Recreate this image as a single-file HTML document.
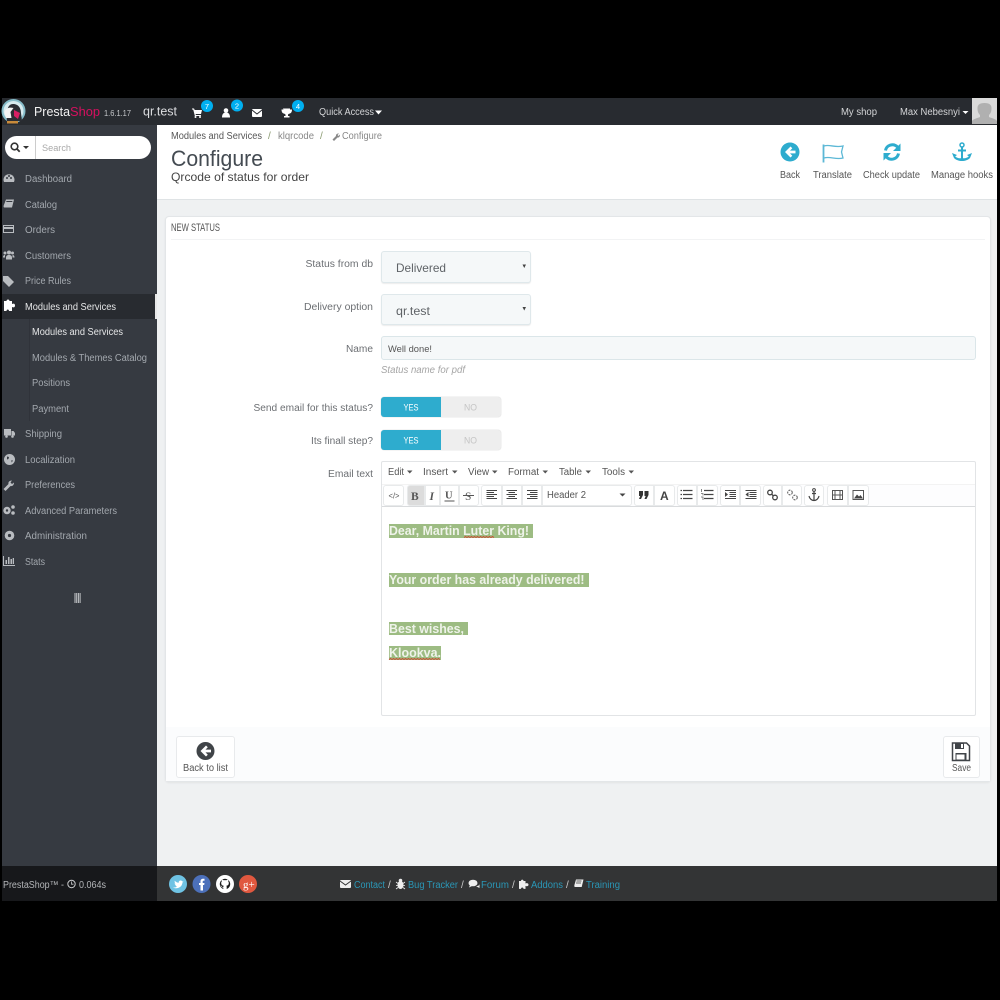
<!DOCTYPE html>
<html><head><meta charset="utf-8"><title>Configure</title>
<style>
html,body{margin:0;padding:0;background:#000;width:1000px;height:1000px;overflow:hidden}
.b{position:absolute;box-sizing:border-box}
svg.o{position:absolute;left:0;top:0}
svg text{font-family:"Liberation Sans",sans-serif;font-size:10px;white-space:pre}
.s text{fill:#a3a8ae}
.g{fill:#6c6f73}
.tb{border:1px solid #e8eaeb;background:#fff;height:21px;top:485px}
</style></head><body>
<div class="b" style="left:2px;top:98px;width:995px;height:803px;background:#eff1f2"></div>
<div class="b" style="left:2px;top:98px;width:995px;height:27px;background:#282b30"></div>
<div class="b" style="left:2px;top:125px;width:155px;height:741px;background:#363a41"></div>
<div class="b" style="left:2px;top:294px;width:155px;height:25px;background:#282b30;border-right:2px solid #e8e8e8"></div>
<div class="b" style="left:29px;top:319px;width:1px;height:102px;background:#30333a"></div>
<div class="b" style="left:157px;top:125px;width:840px;height:75px;background:#fff;border-bottom:1px solid #dfe3e5"></div>
<div class="b" style="left:5px;top:136px;width:146px;height:23px;background:#fff;border-radius:12px"></div>
<div class="b" style="left:35px;top:136px;width:1px;height:23px;background:#ccc"></div>
<div class="b" style="left:972px;top:98px;width:25px;height:26px;background:#dadada"></div>
<div class="b" style="left:165px;top:216px;width:826px;height:566px;background:#fff;border:1px solid #e3e6e8;border-radius:4px;box-shadow:0 1px 2px rgba(0,0,0,.06)"></div>
<div class="b" style="left:171px;top:239px;width:814px;height:1px;background:#f2f3f4"></div>
<div class="b" style="left:166px;top:727px;width:824px;height:54px;background:#fbfcfd"></div>
<div class="b" style="left:381px;top:251px;width:150px;height:32px;background:#f5f8f9;border:1px solid #dfe8eb;border-radius:3px;box-shadow:0 1px 1px rgba(0,0,0,.08)"></div>
<div class="b" style="left:381px;top:294px;width:150px;height:31px;background:#f5f8f9;border:1px solid #dfe8eb;border-radius:3px;box-shadow:0 1px 1px rgba(0,0,0,.08)"></div>
<div class="b" style="left:381px;top:336px;width:595px;height:24px;background:#f5f8f9;border:1px solid #dbe6e9;border-radius:3px"></div>
<div class="b" style="left:381px;top:397px;width:120px;height:20px;background:#eee;border-radius:3px;box-shadow:0 0 1px #bbb"></div>
<div class="b" style="left:381px;top:397px;width:60px;height:20px;background:#2eacce;border-radius:3px 0 0 3px"></div>
<div class="b" style="left:381px;top:430px;width:120px;height:20px;background:#eee;border-radius:3px;box-shadow:0 0 1px #bbb"></div>
<div class="b" style="left:381px;top:430px;width:60px;height:20px;background:#2eacce;border-radius:3px 0 0 3px"></div>
<div class="b" style="left:381px;top:461px;width:595px;height:255px;background:#fff;border:1px solid #e2e4e6;border-radius:2px"></div>
<div class="b" style="left:382px;top:484px;width:593px;height:23px;background:#fdfdfe;border-top:1px solid #f3f3f3;border-bottom:1px solid #d9dbdd"></div>
<div class="b tb" style="left:383px;width:21px;border-radius:3px"></div>
<div class="b tb" style="left:407px;width:18px;background:#dcdcdc;border-radius:3px 0 0 3px"></div>
<div class="b tb" style="left:425px;width:15px"></div>
<div class="b tb" style="left:440px;width:19px"></div>
<div class="b tb" style="left:459px;width:20px;border-radius:0 3px 3px 0"></div>
<div class="b tb" style="left:481px;width:21px;border-radius:3px 0 0 3px"></div>
<div class="b tb" style="left:502px;width:20px"></div>
<div class="b tb" style="left:522px;width:20px"></div>
<div class="b tb" style="left:542px;width:90px;border-radius:0 3px 3px 0"></div>
<div class="b tb" style="left:634px;width:20px;border-radius:3px 0 0 3px"></div>
<div class="b tb" style="left:654px;width:21px;border-radius:0 3px 3px 0"></div>
<div class="b tb" style="left:677px;width:20px;border-radius:3px 0 0 3px"></div>
<div class="b tb" style="left:697px;width:21px;border-radius:0 3px 3px 0"></div>
<div class="b tb" style="left:720px;width:20px;border-radius:3px 0 0 3px"></div>
<div class="b tb" style="left:740px;width:21px;border-radius:0 3px 3px 0"></div>
<div class="b tb" style="left:763px;width:19px;border-radius:3px 0 0 3px"></div>
<div class="b tb" style="left:782px;width:20px;border-radius:0 3px 3px 0"></div>
<div class="b tb" style="left:804px;width:20px;border-radius:3px"></div>
<div class="b tb" style="left:827px;width:21px;border-radius:3px 0 0 3px"></div>
<div class="b tb" style="left:848px;width:21px;border-radius:0 3px 3px 0"></div>
<div class="b" style="left:389px;top:524px;width:144px;height:14px;background:#9dbc83"></div>
<div class="b" style="left:389px;top:573px;width:200px;height:14px;background:#9dbc83"></div>
<div class="b" style="left:389px;top:622px;width:79px;height:13px;background:#9dbc83"></div>
<div class="b" style="left:389px;top:646px;width:52px;height:14px;background:#9dbc83"></div>
<div class="b" style="left:176px;top:736px;width:59px;height:42px;background:#fff;border:1px solid #e8eaec;border-radius:3px"></div>
<div class="b" style="left:943px;top:736px;width:37px;height:42px;background:#fff;border:1px solid #e8eaec;border-radius:3px"></div>
<div class="b" style="left:2px;top:866px;width:155px;height:35px;background:#17181b"></div>
<div class="b" style="left:157px;top:866px;width:840px;height:35px;background:#333435"></div>

<svg class="o" width="1000" height="1000" viewBox="0 0 1000 1000" xmlns="http://www.w3.org/2000/svg">
<!-- logo -->
<circle cx="13.5" cy="111" r="12" fill="#86bcc9"/>
<circle cx="13.5" cy="111" r="10" fill="#d8ebef"/>
<path d="M7 121c-1-8 0-17 6-17 6 0 8 5 8 9l1 8z" fill="#2b2d33"/>
<path d="M4.500 112c1-4 5-5 9-4l-3 4 1 6H6z" fill="#f3f3f3"/>
<path d="M14 110l6 3-2 6-4-3z" fill="#d81e63"/>
<path d="M7 121h11v2.500H7z" fill="#c88a3a"/>
<!-- header text -->
<text x="34" y="116" textLength="36" lengthAdjust="spacingAndGlyphs" style="font-size:13px" fill="#f2f2f2">Presta</text>
<text x="70" y="116" textLength="30" lengthAdjust="spacingAndGlyphs" style="font-size:13px" fill="#d6105f">Shop</text>
<text x="104" y="116" textLength="27" lengthAdjust="spacingAndGlyphs" style="font-size:8px" fill="#c4c6c9">1.6.1.17</text>
<text x="143" y="115.500" textLength="34" lengthAdjust="spacingAndGlyphs" style="font-size:12.500px" fill="#dcdde0">qr.test</text>
<path d="M192 108.500h2l.7 1.500h7.300l-1 4h-5.500l.4 1h5v1h-6l-1.700-6.500h-1.200z" fill="#fff"/><circle cx="195.500" cy="117" r="1" fill="#fff"/><circle cx="200" cy="117" r="1" fill="#fff"/>
<circle cx="207" cy="106" r="6" fill="#00aff0"/><text x="207" y="109" text-anchor="middle" style="font-size:7.500px" fill="#fff">7</text>
<circle cx="226" cy="110.500" r="2.300" fill="#fff"/><path d="M222 117.500c0-3.500 1.500-5 4-5s4 1.500 4 5z" fill="#fff"/>
<circle cx="237" cy="105.500" r="6" fill="#00aff0"/><text x="237" y="108.500" text-anchor="middle" style="font-size:7.500px" fill="#fff">2</text>
<rect x="252" y="109" width="10" height="8" rx="1" fill="#fff"/><path d="M252 110l5 4 5-4" fill="none" stroke="#282b30" stroke-width="1"/>
<path d="M283 108.500h7v1h2c0 2.500-1 4-3 4.200l-1 .8v1.500h1.500v1.500h-5.500v-1.500h1.500v-1.500l-1-.8c-2-.2-3-1.700-3-4.200h2z" fill="#fff"/>
<circle cx="298" cy="106" r="6" fill="#00aff0"/><text x="298" y="109" text-anchor="middle" style="font-size:7.500px" fill="#fff">4</text>
<text x="319" y="115" textLength="55" lengthAdjust="spacingAndGlyphs" fill="#d4d5d7">Quick Access</text>
<path d="M375 110.500h7l-3.500 4z" fill="#fff"/>
<text x="841" y="115" textLength="36" lengthAdjust="spacingAndGlyphs" fill="#d4d5d7">My shop</text>
<text x="900" y="115" textLength="60" lengthAdjust="spacingAndGlyphs" fill="#d4d5d7">Max Nebesnyi</text>
<path d="M962.500 111h6l-3 3z" fill="#fff"/>
<path d="M972 124v-3c1-2 6-3 8-4v-2c-2-2-2.500-4-2.500-7 0-3 2-5 7-5s7 2 7 5c0 3-.5 5-2.500 7v2c2 1 7 2 8 4v3z" fill="#b0b0b0"/>
<!-- search -->
<circle cx="14.500" cy="146.500" r="3.300" fill="none" stroke="#333" stroke-width="1.600"/><path d="M17 149l2.700 2.700" stroke="#333" stroke-width="1.800"/>
<path d="M23 146h6l-3 3z" fill="#333"/>
<text x="42" y="151" textLength="29" lengthAdjust="spacingAndGlyphs" style="font-size:9.500px" fill="#a9a9a9">Search</text>
<!-- sidebar -->
<g class="s">
<text x="25" y="182" textLength="47" lengthAdjust="spacingAndGlyphs">Dashboard</text>
<text x="25" y="208" textLength="32" lengthAdjust="spacingAndGlyphs">Catalog</text>
<text x="25" y="233" textLength="30" lengthAdjust="spacingAndGlyphs">Orders</text>
<text x="25" y="259" textLength="46" lengthAdjust="spacingAndGlyphs">Customers</text>
<text x="25" y="284" textLength="46" lengthAdjust="spacingAndGlyphs">Price Rules</text>
<text x="25" y="310" textLength="91" lengthAdjust="spacingAndGlyphs" style="fill:#e6e7e8">Modules and Services</text>
<text x="32" y="335" textLength="91" lengthAdjust="spacingAndGlyphs" style="fill:#e6e7e8">Modules and Services</text>
<text x="32" y="361" textLength="115" lengthAdjust="spacingAndGlyphs">Modules &amp; Themes Catalog</text>
<text x="32" y="386" textLength="38" lengthAdjust="spacingAndGlyphs">Positions</text>
<text x="32" y="412" textLength="37" lengthAdjust="spacingAndGlyphs">Payment</text>
<text x="25" y="437" textLength="37" lengthAdjust="spacingAndGlyphs">Shipping</text>
<text x="25" y="463" textLength="50" lengthAdjust="spacingAndGlyphs">Localization</text>
<text x="25" y="488" textLength="50" lengthAdjust="spacingAndGlyphs">Preferences</text>
<text x="25" y="514" textLength="92" lengthAdjust="spacingAndGlyphs">Advanced Parameters</text>
<text x="25" y="539" textLength="62" lengthAdjust="spacingAndGlyphs">Administration</text>
<text x="25" y="565" textLength="20" lengthAdjust="spacingAndGlyphs">Stats</text>
</g>
<g fill="#b9bcc0">
<path d="M4 182a5.500 5.500 0 1 1 10 0z"/>
<path d="M6 199.500h8l-2 8h-7.500c-1 0-1-1-.8-2zm.5 1.500l-.3 1h6l.3-1z"/>
<path d="M3 225h11v8H3zm1 1v1h9v-1zm0 3v3h9v-3z" fill-rule="evenodd"/>
<circle cx="9" cy="252.500" r="2"/><circle cx="5" cy="253" r="1.500"/><circle cx="12.500" cy="253" r="1.500"/><path d="M6 259.500v-2c0-1.500 1-2.500 3-2.500s3 1 3 2.500v2zM3 257.500c0-2 1-2.500 2-2.500v2.500zM14.500 257.500c0-2-1-2.500-2-2.500v2.500z"/>
<path d="M3 276h5l6 6-5 5-6-6z"/>
<path d="M4 429h7v6.500H4zM11.500 431h2l1.500 2v2.500h-3.500z"/><circle cx="6.500" cy="436.500" r="1.300"/><circle cx="12.500" cy="436.500" r="1.300"/>
<path d="M9.500 454a5.500 5.500 0 1 0 0 11 5.500 5.500 0 0 0 0-11z"/>
<path d="M3.500 489l5-5c-.5-2 1-3.500 3.500-3.500l-1.500 2 1.500 1.500 2-1.500c0 2.500-1.500 4-3.500 3.500l-5 5z"/>
<circle cx="7" cy="510.500" r="3.700"/><circle cx="13" cy="507" r="1.800"/><circle cx="13" cy="513" r="1.800"/>
<circle cx="9.500" cy="535.500" r="4.800"/>
<path d="M3 556v10h12v-1H4v-9zM5.500 560h1.500v4H5.500zM8 557h1.500v7H8zM10.500 559H12v5h-1.500zM12.700 558h1.300v6h-1.300z"/>
</g>
<path d="M4 301h2.500c0-2 3-2 3 0H12v3c2-1 3 0 3 1.500S14 308 12 307v4H9c0-2-2.500-2-2.500 0H4z" fill="#fff"/>
<circle cx="7" cy="178" r="1" fill="#363a41"/><circle cx="11" cy="178" r="1" fill="#363a41"/><circle cx="9" cy="176" r="1" fill="#363a41"/>
<circle cx="7" cy="510.500" r="1.200" fill="#363a41"/><circle cx="9.500" cy="535.500" r="1.600" fill="#363a41"/>
<path d="M7 456.500l2 .5-.5 2-1.500.5zM11.500 460l1.500.8-1.500 1.700z" fill="#363a41"/>
<path d="M75 593v10M76.700 593v10M78.400 593v10M80.100 593v10" stroke="#c4c6c9" stroke-width="1"/><path d="M74.500 593h7v10h-7z" fill="none"/>
<!-- breadcrumb & title -->
<text x="171" y="139" textLength="91" lengthAdjust="spacingAndGlyphs" fill="#555">Modules and Services</text>
<text x="268" y="139" fill="#8a9a70">/</text>
<text x="278" y="139" textLength="36" lengthAdjust="spacingAndGlyphs" fill="#888">klqrcode</text>
<text x="320" y="139" fill="#8a9a70">/</text>
<path d="M332.500 139.500l3.500-3.500c-.3-1.500 1-2.800 3-2.500l-1.500 1.500 1 1 1.500-1.500c.2 2-1 3.300-2.500 3l-3.500 3.500z" fill="#888"/>
<text x="342" y="139" textLength="40" lengthAdjust="spacingAndGlyphs" fill="#888">Configure</text>
<text x="171" y="166" textLength="92" lengthAdjust="spacingAndGlyphs" style="font-size:22px" fill="#444b52">Configure</text>
<text x="171" y="181" textLength="138" lengthAdjust="spacingAndGlyphs" style="font-size:12px" fill="#444">Qrcode of status for order</text>
<!-- toolbar -->
<circle cx="790" cy="152" r="9.500" fill="#2eacce"/>
<path d="M790.500 146.500l-5.500 5.500 5.500 5.500 1.800-1.800-2.300-2.300h5.500v-2.800H790l2.300-2.300z" fill="#fff"/>
<path d="M823.500 144.500v18" stroke="#5cb8d6" stroke-width="1.800"/>
<path d="M824 146c6-2 10 2 19 0l-1.500 6 1.500 6c-7 2-13-2-19 0" fill="none" stroke="#5cb8d6" stroke-width="1.300"/>
<path d="M885.500 150.500A7 7 0 0 1 897.500 147M898.500 153.500A7 7 0 0 1 886.500 157" fill="none" stroke="#2eacce" stroke-width="3"/>
<path d="M900.500 143.500v7.500h-7.500zM883.500 160.500v-7.500h7.500z" fill="#2eacce"/>
<circle cx="962" cy="145" r="2" fill="none" stroke="#2eacce" stroke-width="1.500"/>
<path d="M962 147v14M958 150.500h8" stroke="#2eacce" stroke-width="2"/>
<path d="M952 153l2 5c2 2 5 3 8 3s6-1 8-3l2-5-5 2 1.800 1.500c-1 1-3 1.500-3.800 1.700h-6c-1-.2-2.800-.7-3.800-1.700L957 155z" fill="#2eacce"/>
<text x="780" y="178" textLength="20" lengthAdjust="spacingAndGlyphs" fill="#555">Back</text>
<text x="813" y="178" textLength="39" lengthAdjust="spacingAndGlyphs" fill="#555">Translate</text>
<text x="863" y="178" textLength="57" lengthAdjust="spacingAndGlyphs" fill="#555">Check update</text>
<text x="931" y="178" textLength="62" lengthAdjust="spacingAndGlyphs" fill="#555">Manage hooks</text>
<!-- panel -->
<text x="171" y="231" textLength="49" lengthAdjust="spacingAndGlyphs" style="font-size:11px" fill="#555">NEW STATUS</text>
<text x="305.500" y="267" textLength="67.500" lengthAdjust="spacingAndGlyphs" class="g">Status from db</text>
<text x="304" y="310" textLength="69" lengthAdjust="spacingAndGlyphs" class="g">Delivery option</text>
<text x="346" y="352" textLength="27" lengthAdjust="spacingAndGlyphs" class="g">Name</text>
<text x="253.500" y="411" textLength="119.500" lengthAdjust="spacingAndGlyphs" class="g">Send email for this status?</text>
<text x="311" y="444" textLength="62" lengthAdjust="spacingAndGlyphs" class="g">Its finall step?</text>
<text x="328" y="477" textLength="45" lengthAdjust="spacingAndGlyphs" class="g">Email text</text>
<text x="396" y="272" textLength="50" lengthAdjust="spacingAndGlyphs" style="font-size:12px" fill="#5f6367">Delivered</text>
<text x="396" y="315" textLength="34" lengthAdjust="spacingAndGlyphs" style="font-size:12px" fill="#5f6367">qr.test</text>
<path d="M522.500 264.500h3.500l-1.750 3.500zM522.500 307h3.500l-1.750 3.500z" fill="#444"/>
<text x="388" y="352" textLength="44" lengthAdjust="spacingAndGlyphs" style="font-size:9.500px" fill="#555">Well done!</text>
<text x="381" y="373" textLength="84" lengthAdjust="spacingAndGlyphs" style="font-style:italic" fill="#a5a5a5">Status name for pdf</text>
<text x="403.500" y="410.500" textLength="15" lengthAdjust="spacingAndGlyphs" style="font-size:9px" fill="#fff">YES</text>
<text x="464" y="410.500" textLength="13" lengthAdjust="spacingAndGlyphs" style="font-size:9px" fill="#c4c4c4">NO</text>
<text x="403.500" y="443.500" textLength="15" lengthAdjust="spacingAndGlyphs" style="font-size:9px" fill="#fff">YES</text>
<text x="464" y="443.500" textLength="13" lengthAdjust="spacingAndGlyphs" style="font-size:9px" fill="#c4c4c4">NO</text>
<!-- editor menu -->
<g fill="#555">
<text x="388" y="475" textLength="16" lengthAdjust="spacingAndGlyphs">Edit</text><path d="M407 470.500h5.500l-2.750 3z"/>
<text x="423" y="475" textLength="25" lengthAdjust="spacingAndGlyphs">Insert</text><path d="M452 470.500h5.500l-2.750 3z"/>
<text x="468" y="475" textLength="21" lengthAdjust="spacingAndGlyphs">View</text><path d="M492 470.500h5.500l-2.750 3z"/>
<text x="508" y="475" textLength="31" lengthAdjust="spacingAndGlyphs">Format</text><path d="M542.500 470.500h5.500l-2.750 3z"/>
<text x="559" y="475" textLength="23" lengthAdjust="spacingAndGlyphs">Table</text><path d="M585.500 470.500h5.500l-2.750 3z"/>
<text x="602" y="475" textLength="23" lengthAdjust="spacingAndGlyphs">Tools</text><path d="M628.500 470.500h5.500l-2.750 3z"/>
</g>
<!-- editor toolbar icons -->
<text x="388.500" y="498.500" textLength="11" lengthAdjust="spacingAndGlyphs" style="font-size:8.500px" fill="#555">&lt;/&gt;</text>
<text x="411" y="500" style="font-size:11.500px;font-weight:bold;font-family:'Liberation Serif',serif" fill="#555">B</text>
<text x="429.500" y="500" style="font-size:11.500px;font-style:italic;font-weight:bold;font-family:'Liberation Serif',serif" fill="#555">I</text>
<text x="445" y="498.500" style="font-size:10.500px;font-weight:bold;font-family:'Liberation Serif',serif" fill="#555">U</text><path d="M444.500 501h10" stroke="#555"/>
<text x="465" y="500" style="font-size:11.500px;font-family:'Liberation Serif',serif" fill="#555">S</text><path d="M463 495.500h11" stroke="#555"/>
<path d="M486.500 490.500h10.500M486.500 492.500h7.500M486.500 494.500h10.500M486.500 496.500h7.500M486.500 498.500h10.500" stroke="#444" stroke-width="1"/>
<path d="M506.500 490.500h10.500M508.500 492.500h6.500M506.500 494.500h10.500M508.500 496.500h6.500M506.500 498.500h10.500" stroke="#444" stroke-width="1"/>
<path d="M527 490.500h10.500M530 492.500h7.500M527 494.500h10.500M530 496.500h7.500M527 498.500h10.500" stroke="#444" stroke-width="1"/>
<text x="547" y="498" textLength="39" lengthAdjust="spacingAndGlyphs" fill="#555">Header 2</text>
<path d="M619.500 493.500h6l-3 3z" fill="#444"/>
<path d="M639 491h4v4l-2 4h-2l1.200-3H639zM644.500 491h4v4l-2 4h-2l1.200-3h-1.200z" fill="#333"/>
<text x="660" y="500" style="font-size:12px;font-weight:bold" fill="#444">A</text>
<path d="M683 490.500h9.500M683 494.500h9.500M683 498.500h9.500" stroke="#444" stroke-width="1.200"/><path d="M680.500 490.500h1.500M680.500 494.500h1.500M680.500 498.500h1.500" stroke="#444" stroke-width="1.200"/>
<path d="M704 490.500h9.500M704 494.500h9.500M704 498.500h9.500" stroke="#444" stroke-width="1.200"/><path d="M701.500 489v3M701 493.500h2v2M701 497h2v3" stroke="#666" stroke-width=".8" fill="none"/>
<path d="M725 490.500h11M729.500 492.500h6.500M729.500 494.500h6.500M729.500 496.500h6.500M725 498.500h11" stroke="#444"/><path d="M725 492l3 2.500-3 2.500z" fill="#444"/>
<path d="M745.500 490.500h11M749.500 492.500h7M749.500 494.500h7M749.500 496.500h7M745.500 498.500h11" stroke="#444"/><path d="M748.500 492l-3 2.500 3 2.500z" fill="#444"/>
<circle cx="770" cy="492.500" r="2.300" fill="none" stroke="#444" stroke-width="1.300"/><circle cx="775" cy="497.500" r="2.300" fill="none" stroke="#444" stroke-width="1.300"/><path d="M771.500 494l2 2" stroke="#444" stroke-width="1.300"/>
<circle cx="790" cy="492.500" r="2.300" fill="none" stroke="#666" stroke-width="1.100" stroke-dasharray="2 1"/><circle cx="795" cy="497.500" r="2.300" fill="none" stroke="#666" stroke-width="1.100" stroke-dasharray="2 1"/>
<circle cx="814" cy="490" r="1.400" fill="none" stroke="#444"/><path d="M814 491.500v8.500M812 493.500h4" stroke="#444" stroke-width="1.200"/><path d="M809 496c.5 3 3 4.500 5 4.500s4.500-1.500 5-4.500" fill="none" stroke="#444" stroke-width="1.200"/>
<path d="M832.500 490.500h10v9h-10zM835 490.500v9M840 490.500v9M832.500 495h10" fill="none" stroke="#555"/>
<rect x="853" y="490.500" width="10.500" height="9" fill="none" stroke="#555"/><path d="M854 498.500l3-4 2 2 1.500-1.500 2.500 3.500z" fill="#444"/>
<!-- editor content -->
<g fill="#eff3ea">
<text x="389" y="535" textLength="140" lengthAdjust="spacingAndGlyphs" style="font-size:12.800px;font-weight:bold">Dear, Martin Luter King!</text>
<text x="389" y="584" textLength="195.500" lengthAdjust="spacingAndGlyphs" style="font-size:12.800px;font-weight:bold">Your order has already delivered!</text>
<text x="389" y="633" textLength="75" lengthAdjust="spacingAndGlyphs" style="font-size:12.800px;font-weight:bold">Best wishes,</text>
<text x="389" y="657" textLength="52" lengthAdjust="spacingAndGlyphs" style="font-size:12.800px;font-weight:bold">Klookva.</text>
</g>
<path d="M464 537.500l1.500-1 1.500 1 1.500-1 1.500 1 1.500-1 1.500 1 1.500-1 1.500 1 1.500-1 1.500 1 1.500-1 1.500 1 1.500-1 1.500 1 1.500-1 1.500 1 1.500-1 1.500 1 1.500-1 1.500 1" fill="none" stroke="#d0402a" stroke-width=".8"/>
<path d="M389 659.500l1.500-1 1.500 1 1.500-1 1.500 1 1.500-1 1.500 1 1.500-1 1.500 1 1.500-1 1.500 1 1.500-1 1.500 1 1.500-1 1.500 1 1.500-1 1.500 1 1.500-1 1.500 1 1.500-1 1.500 1 1.500-1 1.500 1 1.500-1 1.500 1 1.500-1 1.500 1 1.500-1 1.500 1 1.500-1 1.500 1 1.500-1 1.500 1 1.500-1 1.500 1" fill="none" stroke="#d0402a" stroke-width=".8"/>
<!-- panel footer -->
<circle cx="205.500" cy="751" r="9" fill="#404448"/>
<path d="M206 745.500l-5.500 5.500 5.500 5.500 1.800-1.800-2.300-2.300h5.500v-2.800h-5.500l2.300-2.300z" fill="#fff"/>
<text x="183" y="771" textLength="45" lengthAdjust="spacingAndGlyphs" fill="#555">Back to list</text>
<path d="M952.500 743h14l3 3v14.500h-17z" fill="none" stroke="#404448" stroke-width="1.500"/>
<path d="M955 743h9v6h-9zM955.500 753h11v7h-11z" fill="#404448"/><path d="M956.500 754.500h8v5h-8z" fill="#fff"/><path d="M961 744h2v4h-2z" fill="#fff"/>
<text x="952" y="771" textLength="19" lengthAdjust="spacingAndGlyphs" fill="#555">Save</text>
<!-- footer -->
<text x="3" y="888" textLength="61" lengthAdjust="spacingAndGlyphs" fill="#b4b6b9">PrestaShop™ -</text>
<circle cx="71.500" cy="884" r="3.700" fill="none" stroke="#c9cbcd" stroke-width="1"/><path d="M71.500 881.500v2.700h2" fill="none" stroke="#c9cbcd" stroke-width=".8"/>
<text x="79" y="888" textLength="27" lengthAdjust="spacingAndGlyphs" fill="#b4b6b9">0.064s</text>
<circle cx="178" cy="884" r="9" fill="#6fc3e4"/><path d="M173 887.500c4 2 9 0 9.500-5l1-1.300-1.200.3c-1-1.800-4-1-3.500 1.200-1.500 0-3-.8-4-2-.5 1 0 2.300.8 2.800l-1-.2c0 1 .7 1.800 1.700 2l-.9.100c.3.700 1 1.200 1.800 1.200-.8.600-2 .9-3.200.9z" fill="#fff"/>
<circle cx="201.500" cy="884" r="9" fill="#4c70ba"/><path d="M200.500 890.500v-5.500H199v-2h1.500v-1.500c0-2 1-2.800 2.800-2.800h1.200v2h-1c-.6 0-.8.300-.8 1V883h1.800l-.3 2H203v5.500z" fill="#fff"/>
<circle cx="225" cy="884" r="9" fill="#fff"/><path d="M225 878.800a5.300 5.300 0 0 0-1.700 10.300v-1.500c-1.700.3-2-.9-2.200-1.300-.4-.5-.7-.6-.5-.8.700 0 1.100.8 1.300 1 .6.900 1.500.6 1.500.3 0-.5.200-.8.400-1-1.400-.2-2.600-.8-2.600-2.800 0-.7.200-1.200.6-1.600-.1-.3-.2-1 .1-1.700 0 0 .7-.2 1.700.6a5 5 0 0 1 2.800 0c1-.8 1.700-.6 1.700-.6.300.7.200 1.400.1 1.700.4.400.6.900.6 1.600 0 2-1.200 2.600-2.600 2.800.3.200.5.600.5 1.200v2.100a5.300 5.300 0 0 0-1.700-10.300z" fill="#1a1a1a"/>
<circle cx="248" cy="884" r="9" fill="#e0583f"/><text x="243" y="888" style="font-size:11px;font-family:'Liberation Serif',serif" fill="#fff">g+</text>
<g fill="#2a97b7">
<text x="354" y="888" textLength="31" lengthAdjust="spacingAndGlyphs">Contact</text>
<text x="408" y="888" textLength="50" lengthAdjust="spacingAndGlyphs">Bug Tracker</text>
<text x="481" y="888" textLength="28" lengthAdjust="spacingAndGlyphs">Forum</text>
<text x="531" y="888" textLength="32" lengthAdjust="spacingAndGlyphs">Addons</text>
<text x="586" y="888" textLength="34" lengthAdjust="spacingAndGlyphs">Training</text>
</g>
<g fill="#ccc"><text x="388" y="888">/</text><text x="461" y="888">/</text><text x="512" y="888">/</text><text x="566" y="888">/</text></g>
<rect x="340" y="880" width="11" height="8" rx="1" fill="#eee"/><path d="M340 881l5.500 4 5.500-4" fill="none" stroke="#333435" stroke-width="1"/>
<ellipse cx="400.500" cy="885" rx="3" ry="4" fill="#eee"/><circle cx="400.500" cy="880.500" r="1.800" fill="#eee"/><path d="M396 882l2 1.500M405 882l-2 1.500M396 885.500h2M403 885.500h2M396 889l2-1.500M405 889l-2-1.500" stroke="#eee" stroke-width=".8"/>
<ellipse cx="473" cy="883" rx="4.500" ry="3.300" fill="#eee"/><path d="M470 885l-1 2.500 3-1.500zM476 886c2 .3 3.300-.5 3.500-2 .1 1.500 0 3 0 4l-2-1z" fill="#eee"/>
<path d="M519 881h2c0-1.800 2.500-1.800 2.500 0h2v2.500c1.500-.8 3 0 3 1.200s-1.500 2-3 1.200v3h-2c0-1.800-2.500-1.800-2.500 0h-2z" fill="#eee"/>
<path d="M576 879.500h7.500l-1.800 7.500h-6.500c-1 0-1-1-.8-2z" fill="#eee"/><path d="M576.500 881h5M576 883h5" stroke="#333435" stroke-width=".7"/>
</svg>
</body></html>
